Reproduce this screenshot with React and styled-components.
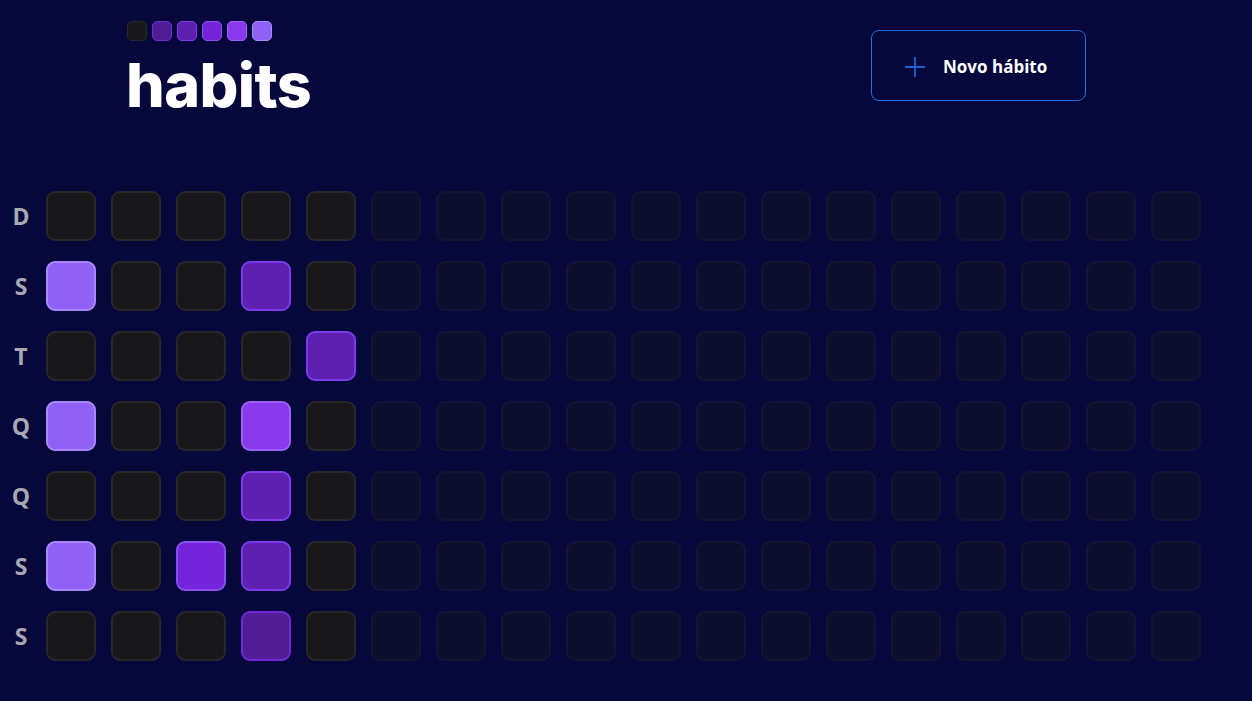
import React from "react";
import styled, { createGlobalStyle } from "styled-components";

const GlobalStyle = createGlobalStyle`
  html, body {
    margin: 0;
    padding: 0;
    background: #06073a;
    color: #fff;
    font-family: Inter, "Noto Sans", sans-serif;
  }
`;

const levels = {
  0: { bg: "#18181b", border: "#27272a" },
  1: { bg: "#501d94", border: "#6d28d9" },
  2: { bg: "#5f1fb1", border: "#7c3aed" },
  3: { bg: "#7424d9", border: "#8b4ef0" },
  4: { bg: "#8a3aec", border: "#9d5ff5" },
  5: { bg: "#9061f5", border: "#a889fa" },
};

const Page = styled.div`
  width: 1252px;
  height: 701px;
  overflow: hidden;
`;

const Header = styled.header`
  display: flex;
  align-items: flex-start;
  justify-content: space-between;
  width: 959px;
  padding: 21px 0 0 127px;
`;

const Brand = styled.div`
  display: flex;
  flex-direction: column;
`;

const Swatches = styled.div`
  display: flex;
  gap: 5px;
`;

const Swatch = styled.span`
  width: 20px;
  height: 20px;
  box-sizing: border-box;
  border-radius: 5px;
  border: 1px solid ${(p) => levels[p.$level].border};
  background: ${(p) => levels[p.$level].bg};
`;

const Title = styled.h1`
  margin: 14px 0 0 -1px;
  font-size: 61px;
  font-weight: 800;
  line-height: 61px;
  letter-spacing: -0.6px;
`;

const NewButton = styled.button`
  display: flex;
  align-items: center;
  gap: 17px;
  margin-top: 9px;
  width: 215px;
  height: 71px;
  padding: 2px 0 0 32px;
  box-sizing: border-box;
  background: transparent;
  border: 1px solid #1d6ee0;
  border-radius: 8px;
  color: #fff;
  font-family: "Open Sans", sans-serif;
  font-size: 17px;
  font-weight: 700;
  cursor: pointer;
`;

const Summary = styled.section`
  display: flex;
  padding: 75px 0 0 0;
  gap: 4px;
`;

const WeekDays = styled.div`
  display: grid;
  grid-template-rows: repeat(7, 50px);
  row-gap: 20px;
  width: 42px;
`;

const WeekDay = styled.div`
  display: flex;
  align-items: center;
  justify-content: center;
  font-family: "Open Sans", sans-serif;
  font-size: 23px;
  font-weight: 700;
  color: #a8a8b3;
`;

const Days = styled.div`
  display: grid;
  grid-template-rows: repeat(7, 50px);
  grid-auto-flow: column;
  grid-auto-columns: 50px;
  row-gap: 20px;
  column-gap: 15px;
`;

const Day = styled.div`
  box-sizing: border-box;
  width: 50px;
  height: 50px;
  border-radius: 9px;
  border: 2px solid ${(p) => levels[p.$level].border};
  background: ${(p) => levels[p.$level].bg};
  opacity: ${(p) => (p.$future ? 0.4 : 1)};
`;

const weekDays = ["D", "S", "T", "Q", "Q", "S", "S"];

const filled = {
  "0-1": 5,
  "3-1": 2,
  "4-2": 2,
  "0-3": 5,
  "3-3": 4,
  "3-4": 2,
  "0-5": 5,
  "2-5": 3,
  "3-5": 2,
  "3-6": 1,
};

const columns = 18;
const pastColumns = 5;

export default function App() {
  const cells = [];
  for (let c = 0; c < columns; c++) {
    for (let r = 0; r < 7; r++) {
      cells.push(
        <Day
          key={`${c}-${r}`}
          $level={filled[`${c}-${r}`] || 0}
          $future={c >= pastColumns}
        />
      );
    }
  }

  return (
    <>
      <GlobalStyle />
      <Page>
        <Header>
          <Brand>
            <Swatches>
              {[0, 1, 2, 3, 4, 5].map((l) => (
                <Swatch key={l} $level={l} />
              ))}
            </Swatches>
            <Title>habits</Title>
          </Brand>
          <NewButton>
            <svg width="22" height="22" viewBox="0 0 22 22" fill="none" stroke="#1d5fd6" strokeWidth="1.8">
              <path d="M11 1v20M1 11h20" />
            </svg>
            Novo hábito
          </NewButton>
        </Header>
        <Summary>
          <WeekDays>
            {weekDays.map((d, i) => (
              <WeekDay key={i}>{d}</WeekDay>
            ))}
          </WeekDays>
          <Days>{cells}</Days>
        </Summary>
      </Page>
    </>
  );
}
